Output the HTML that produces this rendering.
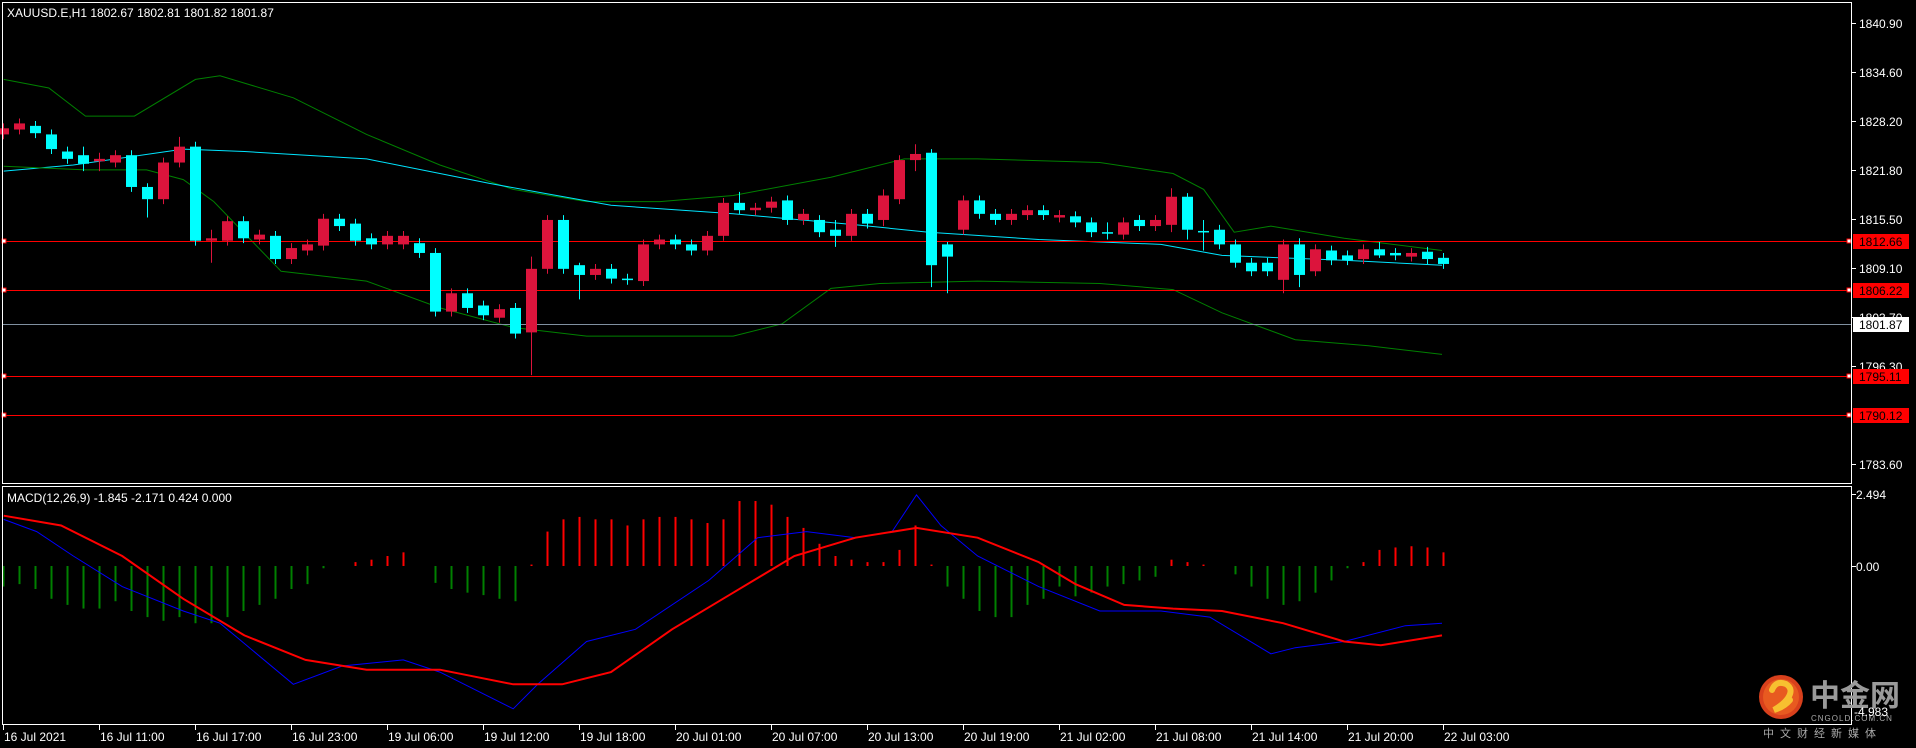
<!DOCTYPE html>
<html><head><meta charset="utf-8"><style>
html,body{margin:0;padding:0;background:#000;width:1916px;height:748px;overflow:hidden}
svg{display:block}
text{font-family:"Liberation Sans",sans-serif;font-size:12px;fill:#fff}
.cn{font-family:"Liberation Sans","Noto Sans CJK SC",sans-serif}
</style></head><body>
<svg id="s" width="1916" height="748" xmlns="http://www.w3.org/2000/svg">
<rect width="1916" height="748" fill="#000"/>
<g id="g"></g>
<rect x="2.5" y="2.5" width="1849" height="481" fill="none" stroke="#fff"/>
<rect x="2.5" y="486.5" width="1849" height="238" fill="none" stroke="#fff"/>
<text x="7" y="17">XAUUSD.E,H1  1802.67 1802.81 1801.82 1801.87</text>
<text x="7" y="502">MACD(12,26,9) -1.845 -2.171 0.424 0.000</text>
<g id="ax"></g>
<circle cx="1781" cy="697" r="22" fill="#d8401c"/>
<circle cx="1781" cy="697" r="18" fill="#e85a20"/>
<path d="M1772 690 q4 -10 14 -6 q8 5 2 14 q-4 6 -14 12 q10 -3 16 -10" stroke="#f7c030" stroke-width="6" fill="none" stroke-linecap="round"/>
<text class="cn" x="1810" y="706" style="font-size:30px;font-weight:bold;fill:#9a9a9a">中金网</text>
<text x="1811" y="721" style="font-size:8px;fill:#aaa;letter-spacing:1px">CNGOLD.COM.CN</text>
<text class="cn" x="1763" y="737" style="font-size:11px;fill:#aaa;letter-spacing:6px">中文财经新媒体</text>
<text x="1854" y="716">-4.983</text>
</svg>
<script>
const NS="http://www.w3.org/2000/svg",g=document.getElementById('g'),ax=document.getElementById('ax');
const K=1.222;
function el(t,a,p){const e=document.createElementNS(NS,t);for(const k in a)e.setAttribute(k,a[k]);(p||g).appendChild(e);return e;}
function pl(pts,col,w){el('polyline',{points:pts.map(p=>(p[0]*K).toFixed(1)+','+(p[1]*K).toFixed(1)).join(' '),fill:'none',stroke:col,'stroke-width':w});}
// bands
pl([[3,65],[40,72],[70,95],[110,95],[160,65],[180,62],[240,80],[300,110],[360,135],[420,155],[480,165],[540,165],[600,160],[680,145],[740,130],[800,130],[900,133],[960,142],[985,155],[1010,190],[1040,185],[1100,195],[1180,205]],'#008000',1);
pl([[3,140],[60,135],[150,122],[200,124],[300,130],[400,150],[500,168],[600,175],[700,184],[760,190],[850,196],[950,200],[1000,209],[1100,213],[1180,217]],'#00e5ff',1);
pl([[3,136],[70,139],[120,139],[150,147],[175,165],[230,222],[300,230],[360,252],[420,268],[480,275],[600,275],[640,265],[680,236],[720,232],[800,230],[900,232],[960,237],[1000,256],[1060,278],[1120,283],[1180,290]],'#008000',1);
// hlines
[[241,'#ff0000'],[290,'#ff0000'],[376,'#ff0000'],[415,'#ff0000']].forEach(l=>{el('line',{x1:3,x2:1851,y1:l[0]+.5,y2:l[0]+.5,stroke:l[1]});el('rect',{x:2,y:l[0]-2,width:4,height:4,fill:'#fff',stroke:'#f00'});el('rect',{x:1847,y:l[0]-2,width:4,height:4,fill:'#fff',stroke:'#f00'});});
el('line',{x1:3,x2:1851,y1:324.5,y2:324.5,stroke:'#8090a0'});
const C=[[105,110,'r'],[101,106,'r'],[103,109,'c'],[110,122,'c'],[124,130,'c'],[127,134,'c',120,140],[130,132,'r',125,140],[127,133,'r'],[127,153,'c'],[153,163,'c',150,178],[133,163,'r'],[120,133,'r',112,137],[120,197,'c'],[195,197,'r',188,215],[181,197,'r'],[181,195,'c'],[192,196,'r'],[193,212,'c'],[203,212,'r'],[200,205,'r'],[179,201,'r'],[179,185,'c'],[183,197,'c'],[195,200,'c'],[193,200,'r'],[193,200,'r'],[199,207,'c'],[207,255,'c'],[240,255,'r'],[240,252,'c'],[250,258,'c'],[253,260,'r'],[252,273,'c'],[220,272,'r',210,307],[180,220,'r'],[180,220,'c'],[217,225,'c',215,245],[220,225,'r'],[220,228,'c'],[228,229,'c'],[200,230,'r'],[196,200,'r'],[196,200,'c'],[200,205,'c'],[193,205,'r'],[166,193,'r'],[166,172,'c',157,175],[170,172,'r'],[165,170,'r'],[164,180,'c'],[175,180,'r'],[180,190,'c'],[188,193,'c',180,202],[175,193,'r'],[175,183,'c'],[160,180,'r',155,185],[131,163,'r'],[126,131,'r',118,140],[125,217,'c',122,235],[200,210,'c',198,240],[164,188,'r',160,192],[164,175,'c'],[175,180,'c'],[175,180,'r'],[172,176,'r'],[172,176,'c'],[176,178,'r'],[177,182,'c'],[182,190,'c'],[190,191,'c',182,196],[182,192,'r'],[180,185,'c'],[180,185,'r'],[161,184,'r',154,190],[161,188,'c',158,196],[189,190,'c',180,205],[188,200,'c'],[200,215,'c'],[215,222,'c'],[215,222,'c'],[200,229,'r',196,240],[200,225,'c',195,235],[204,222,'r'],[205,213,'c'],[209,213,'c'],[204,212,'r'],[204,209,'c',198,211],[207,209,'c'],[207,210,'r'],[206,212,'c'],[211,216,'c']];
C.forEach((b,i)=>{const cx=3+16*i,col=b[2]=='r'?'#dc143c':'#00ffff';let t=b[0]*K,bo=b[1]*K;let wt=(b[3]||b[0]-4)*K,wb=(b[4]||b[1]+4)*K;
el('line',{x1:cx+.5,x2:cx+.5,y1:wt,y2:wb,stroke:col});el('rect',{x:cx-5,y:t,width:11,height:Math.max(1.5,bo-t),fill:col});});
const H=[480,478,482,490,495,498,498,492,500,505,508,505,510,510,505,500,495,490,482,478,465,463,460,458,455,452,463,477,482,485,487,490,492,462,435,425,423,425,425,430,425,423,423,425,428,425,410,410,413,423,432,445,455,458,460,460,450,430,462,480,490,500,505,505,495,490,480,488,485,480,478,475,472,458,460,462,463,470,480,490,495,492,485,475,465,460,450,448,447,448,452];
H.forEach((v,i)=>{const cx=3+16*i+.5,z=566;const y=v*K;if(Math.abs(y-z)<1)return;el('line',{x1:cx,x2:cx,y1:z,y2:y,stroke:v>463?'#008000':'#ff0000','stroke-width':2});});
pl([[3,425],[30,435],[60,455],[100,480],[150,500],[180,510],[240,560],[280,545],[330,540],[360,550],[420,580],[440,560],[480,525],[520,515],[580,475],[620,440],[660,435],[700,440],[730,435],[750,405],[770,430],[800,455],[850,480],[900,500],[950,500],[990,505],[1040,535],[1060,530],[1100,525],[1150,512],[1180,510]],'#0000ff',1);
pl([[3,422],[50,430],[100,455],[150,490],[200,520],[250,540],[300,548],[360,548],[420,560],[460,560],[500,550],[550,515],[600,485],[650,455],[700,440],[750,432],[800,440],[850,460],[880,478],[920,495],[960,498],[1000,500],[1050,510],[1100,525],[1130,528],[1180,520]],'#ff0000',2);
[[1840.90,23],[1834.60,72],[1828.20,121],[1821.80,170],[1815.50,219],[1809.10,268],[1803.70,317],[1796.30,366],[1783.60,464]].forEach(p=>{el('line',{x1:1852,x2:1856,y1:p[1]+.5,y2:p[1]+.5,stroke:'#fff'},ax);const t=el('text',{x:1859,y:p[1]+5},ax);t.textContent=p[0].toFixed(2);});
[[1812.66,241,'#ff0000','#000'],[1806.22,290,'#ff0000','#000'],[1801.87,324,'#fff','#000'],[1795.11,376,'#ff0000','#000'],[1790.12,415,'#ff0000','#000']].forEach(p=>{el('rect',{x:1853,y:p[1]-7,width:56,height:15,fill:p[2]},ax);const t=el('text',{x:1859,y:p[1]+5,style:'fill:'+p[3]},ax);t.textContent=p[0].toFixed(2);});
[[2.494,494],[0,566]].forEach(p=>{el('line',{x1:1852,x2:1856,y1:p[1]+.5,y2:p[1]+.5,stroke:'#fff'},ax);const t=el('text',{x:1856,y:p[1]+5},ax);t.textContent=p[0]==0?'0.00':'2.494';});
const T=['16 Jul 2021','16 Jul 11:00','16 Jul 17:00','16 Jul 23:00','19 Jul 06:00','19 Jul 12:00','19 Jul 18:00','20 Jul 01:00','20 Jul 07:00','20 Jul 13:00','20 Jul 19:00','21 Jul 02:00','21 Jul 08:00','21 Jul 14:00','21 Jul 20:00','22 Jul 03:00'];
T.forEach((s,i)=>{const x=3+96*i;el('line',{x1:x+.5,x2:x+.5,y1:725,y2:730,stroke:'#fff'},ax);const t=el('text',{x:x+1,y:741},ax);t.textContent=s;});
</script>
</body></html>
